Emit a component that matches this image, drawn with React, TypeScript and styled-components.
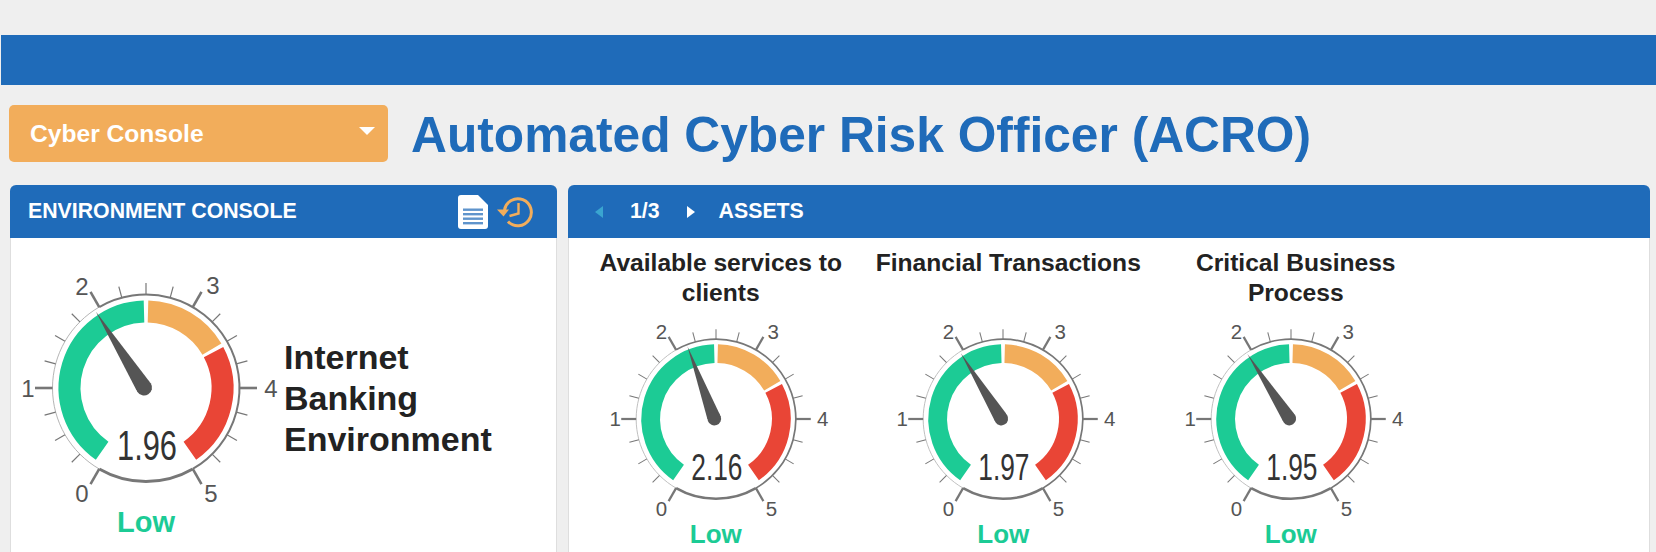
import React from "react";
import styled, { createGlobalStyle } from "styled-components";

const BLUE = "#1f6bb9";
const ORANGE = "#f2ad5b";
const RED = "#e94536";
const GREEN = "#1ccb95";
const GREY = "#777777";

const GlobalStyle = createGlobalStyle`
  html, body {
    margin: 0;
    padding: 0;
    background: #efefef;
    font-family: "Liberation Sans", Arial, sans-serif;
  }
`;

const Page = styled.div`
  height: 552px;
  overflow: hidden;
  padding-top: 35px;
  box-sizing: border-box;
`;

const TopBar = styled.div`
  height: 50px;
  margin-left: 1px;
  background: ${BLUE};
`;

const TitleRow = styled.div`
  display: flex;
  align-items: center;
  margin-top: 20px;
  padding-left: 9px;
`;

const Dropdown = styled.div`
  width: 379px;
  height: 57px;
  box-sizing: border-box;
  padding: 0 13px 0 21px;
  display: flex;
  align-items: center;
  justify-content: space-between;
  background: ${ORANGE};
  border-radius: 5px;
  color: #fff;
  font-size: 24.6px;
  font-weight: bold;
`;

const DropdownCaret = styled.span`
  width: 0;
  height: 0;
  margin-bottom: 5px;
  border-left: 8px solid transparent;
  border-right: 8px solid transparent;
  border-top: 8px solid #fff;
`;

const Title = styled.h1`
  margin: 3px 0 0 23px;
  color: ${BLUE};
  font-size: 49.7px;
  line-height: 54px;
  font-weight: bold;
  white-space: nowrap;
`;

const Panels = styled.div`
  display: flex;
  gap: 11px;
  margin-top: 23px;
  padding-left: 10px;
`;

const Panel = styled.section<{ $width: number }>`
  width: ${(p) => p.$width}px;
  height: 380px;
  box-sizing: border-box;
  background: #fff;
  border: 1px solid #dedede;
  border-top: none;
  border-radius: 6px 6px 0 0;
`;

const PanelHeader = styled.header`
  height: 53px;
  margin: 0 -1px;
  display: flex;
  align-items: center;
  background: ${BLUE};
  border-radius: 6px 6px 0 0;
  color: #fff;
  font-size: 21.3px;
  font-weight: bold;
  white-space: nowrap;
`;

const HeaderTitle = styled.span`
  margin-left: 18px;
`;

const HeaderIcons = styled.div`
  display: flex;
  align-items: center;
  gap: 9px;
  margin-left: auto;
  margin-right: 24px;
`;

const Arrow = styled.span<{ $dir: "left" | "right"; $color: string }>`
  width: 0;
  height: 0;
  border-top: 6px solid transparent;
  border-bottom: 6px solid transparent;
  ${(p) => (p.$dir === "left" ? "border-right" : "border-left")}: 8px solid ${(p) => p.$color};
`;

const Pager = styled.div`
  display: flex;
  align-items: center;
  margin-left: 27px;
`;

const PagerText = styled.span`
  margin: 0 27px;
`;

const AssetsLabel = styled.span`
  margin-left: 24px;
`;

const EnvBody = styled.div`
  display: flex;
  align-items: flex-start;
  padding: 20px 0 0 5px;
  gap: 8px;
`;

const GaugeColumn = styled.div`
  display: flex;
  flex-direction: column;
  align-items: center;
`;

const EnvName = styled.div`
  margin-top: 79px;
  color: #222;
  font-size: 34px;
  line-height: 41px;
  font-weight: bold;
`;

const StatusLabel = styled.div<{ $size: number }>`
  color: ${GREEN};
  font-size: ${(p) => p.$size}px;
  line-height: ${(p) => p.$size}px;
  font-weight: bold;
`;

const AssetGrid = styled.div`
  display: grid;
  grid-template-columns: repeat(3, 287.5px);
  padding: 10px 0 0 8px;
`;

const AssetCell = styled.div`
  display: flex;
  flex-direction: column;
  align-items: center;
`;

const AssetTitle = styled.div`
  width: 270px;
  height: 60px;
  color: #222;
  font-size: 24.6px;
  line-height: 30px;
  font-weight: bold;
  text-align: center;
`;

const AssetGauge = styled.div`
  display: flex;
  flex-direction: column;
  align-items: center;
  margin-right: 10px;
`;

const GaugeSvg = styled.svg`
  display: block;
  overflow: visible;
`;

const ScaleNumber = styled.text`
  fill: #555;
  font-family: "Liberation Sans", Arial, sans-serif;
  font-size: 24px;
  text-anchor: middle;
  dominant-baseline: central;
`;

const Reading = styled.text`
  fill: #333;
  font-family: "Liberation Sans", Arial, sans-serif;
  font-size: 43px;
`;

const polar = (deg: number, r: number) => {
  const a = (deg * Math.PI) / 180;
  return [r * Math.sin(a), -r * Math.cos(a)];
};

const arc = (from: number, to: number, r: number) => {
  const [x1, y1] = polar(from, r);
  const [x2, y2] = polar(to, r);
  const large = Math.abs(to - from) > 180 ? 1 : 0;
  return `M${x1} ${y1}A${r} ${r} 0 ${large} 1 ${x2} ${y2}`;
};

const SCALE_LABELS = [
  { text: "0", x: -64, y: 105 },
  { text: "1", x: -118, y: 0 },
  { text: "2", x: -64, y: -102 },
  { text: "3", x: 67, y: -103 },
  { text: "4", x: 125, y: 0 },
  { text: "5", x: 65, y: 105 },
];

const TICKS = Array.from({ length: 21 }, (_, i) => -150 + i * 15);

const Gauge = ({ value, width }: { value: number; width: number }) => {
  const angle = -150 + value * 60;
  return (
    <GaugeSvg width={width} height={(width * 250) / 260} viewBox="-130 -130 260 250">
      <path d={arc(-145, -1.5, 76.5)} fill="none" stroke={GREEN} strokeWidth={22} />
      <path d={arc(1.5, 59.5, 76.5)} fill="none" stroke={ORANGE} strokeWidth={22} />
      <path d={arc(62, 145, 76.5)} fill="none" stroke={RED} strokeWidth={22} />

      <path d={arc(-150, -30, 93.5)} fill="none" stroke="#b5b5b5" strokeWidth={1} />
      <path d={arc(-30, 150, 93.5)} fill="none" stroke={GREY} strokeWidth={2} />
      <path d={arc(150, 210, 93.5)} fill="none" stroke={GREY} strokeWidth={3} />

      {TICKS.map((t, i) => {
        const major = i % 4 === 0;
        const [x1, y1] = polar(t, 93.5);
        const [x2, y2] = polar(t, major ? 111 : 105);
        return (
          <line
            key={t}
            x1={x1}
            y1={y1}
            x2={x2}
            y2={y2}
            stroke={GREY}
            strokeWidth={major ? 2.6 : 1.2}
          />
        );
      })}

      {SCALE_LABELS.map((l) => (
        <ScaleNumber key={l.text} x={l.x} y={l.y}>
          {l.text}
        </ScaleNumber>
      ))}

      <g transform={`translate(-2 -0.5) rotate(${angle})`}>
        <path d="M-7.8 -2L0 -90L7.8 -2Z" fill="#555" />
        <circle r={8} fill="#555" />
      </g>

      <Reading x={-29} y={72} textLength={60} lengthAdjust="spacingAndGlyphs">
        {value.toFixed(2)}
      </Reading>
    </GaugeSvg>
  );
};

const DocIcon = () => (
  <svg width="30" height="34" viewBox="0 0 30 34">
    <path
      d="M3 0H20L30 10V31a3 3 0 0 1-3 3H3a3 3 0 0 1-3-3V3a3 3 0 0 1 3-3Z"
      fill="#fff"
    />
    {[13.5, 18, 22.5, 27].map((y) => (
      <rect key={y} x="5" y={y} width="20" height="2.4" fill="#5f94cc" />
    ))}
  </svg>
);

const HistoryIcon = () => (
  <svg width="36" height="32" viewBox="0 0 36 32" fill="none" stroke={ORANGE}>
    <path d="M7.5 14A13.5 13.5 0 1 1 11 25.5" strokeWidth="3" />
    <path d="M0 13.5H12L6.5 20.5Z" fill={ORANGE} stroke="none" />
    <path d="M21.5 7V17.5L12.5 20" strokeWidth="2.4" />
  </svg>
);

const ASSETS = [
  { title: "Available services to clients", value: 2.16 },
  { title: "Financial Transactions", value: 1.97 },
  { title: "Critical Business Process", value: 1.95 },
];

export default function App() {
  return (
    <Page>
      <GlobalStyle />
      <TopBar />
      <TitleRow>
        <Dropdown>
          Cyber Console
          <DropdownCaret />
        </Dropdown>
        <Title>Automated Cyber Risk Officer (ACRO)</Title>
      </TitleRow>
      <Panels>
        <Panel $width={547}>
          <PanelHeader>
            <HeaderTitle>ENVIRONMENT CONSOLE</HeaderTitle>
            <HeaderIcons>
              <DocIcon />
              <HistoryIcon />
            </HeaderIcons>
          </PanelHeader>
          <EnvBody>
            <GaugeColumn>
              <Gauge value={1.96} width={260} />
              <StatusLabel $size={29}>Low</StatusLabel>
            </GaugeColumn>
            <EnvName>
              Internet
              <br />
              Banking
              <br />
              Environment
            </EnvName>
          </EnvBody>
        </Panel>
        <Panel $width={1082}>
          <PanelHeader>
            <Pager>
              <Arrow $dir="left" $color="#3aa5d0" />
              <PagerText>1/3</PagerText>
              <Arrow $dir="right" $color="#fff" />
            </Pager>
            <AssetsLabel>ASSETS</AssetsLabel>
          </PanelHeader>
          <AssetGrid>
            {ASSETS.map((a) => (
              <AssetCell key={a.title}>
                <AssetTitle>{a.title}</AssetTitle>
                <AssetGauge>
                  <Gauge value={a.value} width={222} />
                  <StatusLabel $size={26}>Low</StatusLabel>
                </AssetGauge>
              </AssetCell>
            ))}
          </AssetGrid>
        </Panel>
      </Panels>
    </Page>
  );
}
